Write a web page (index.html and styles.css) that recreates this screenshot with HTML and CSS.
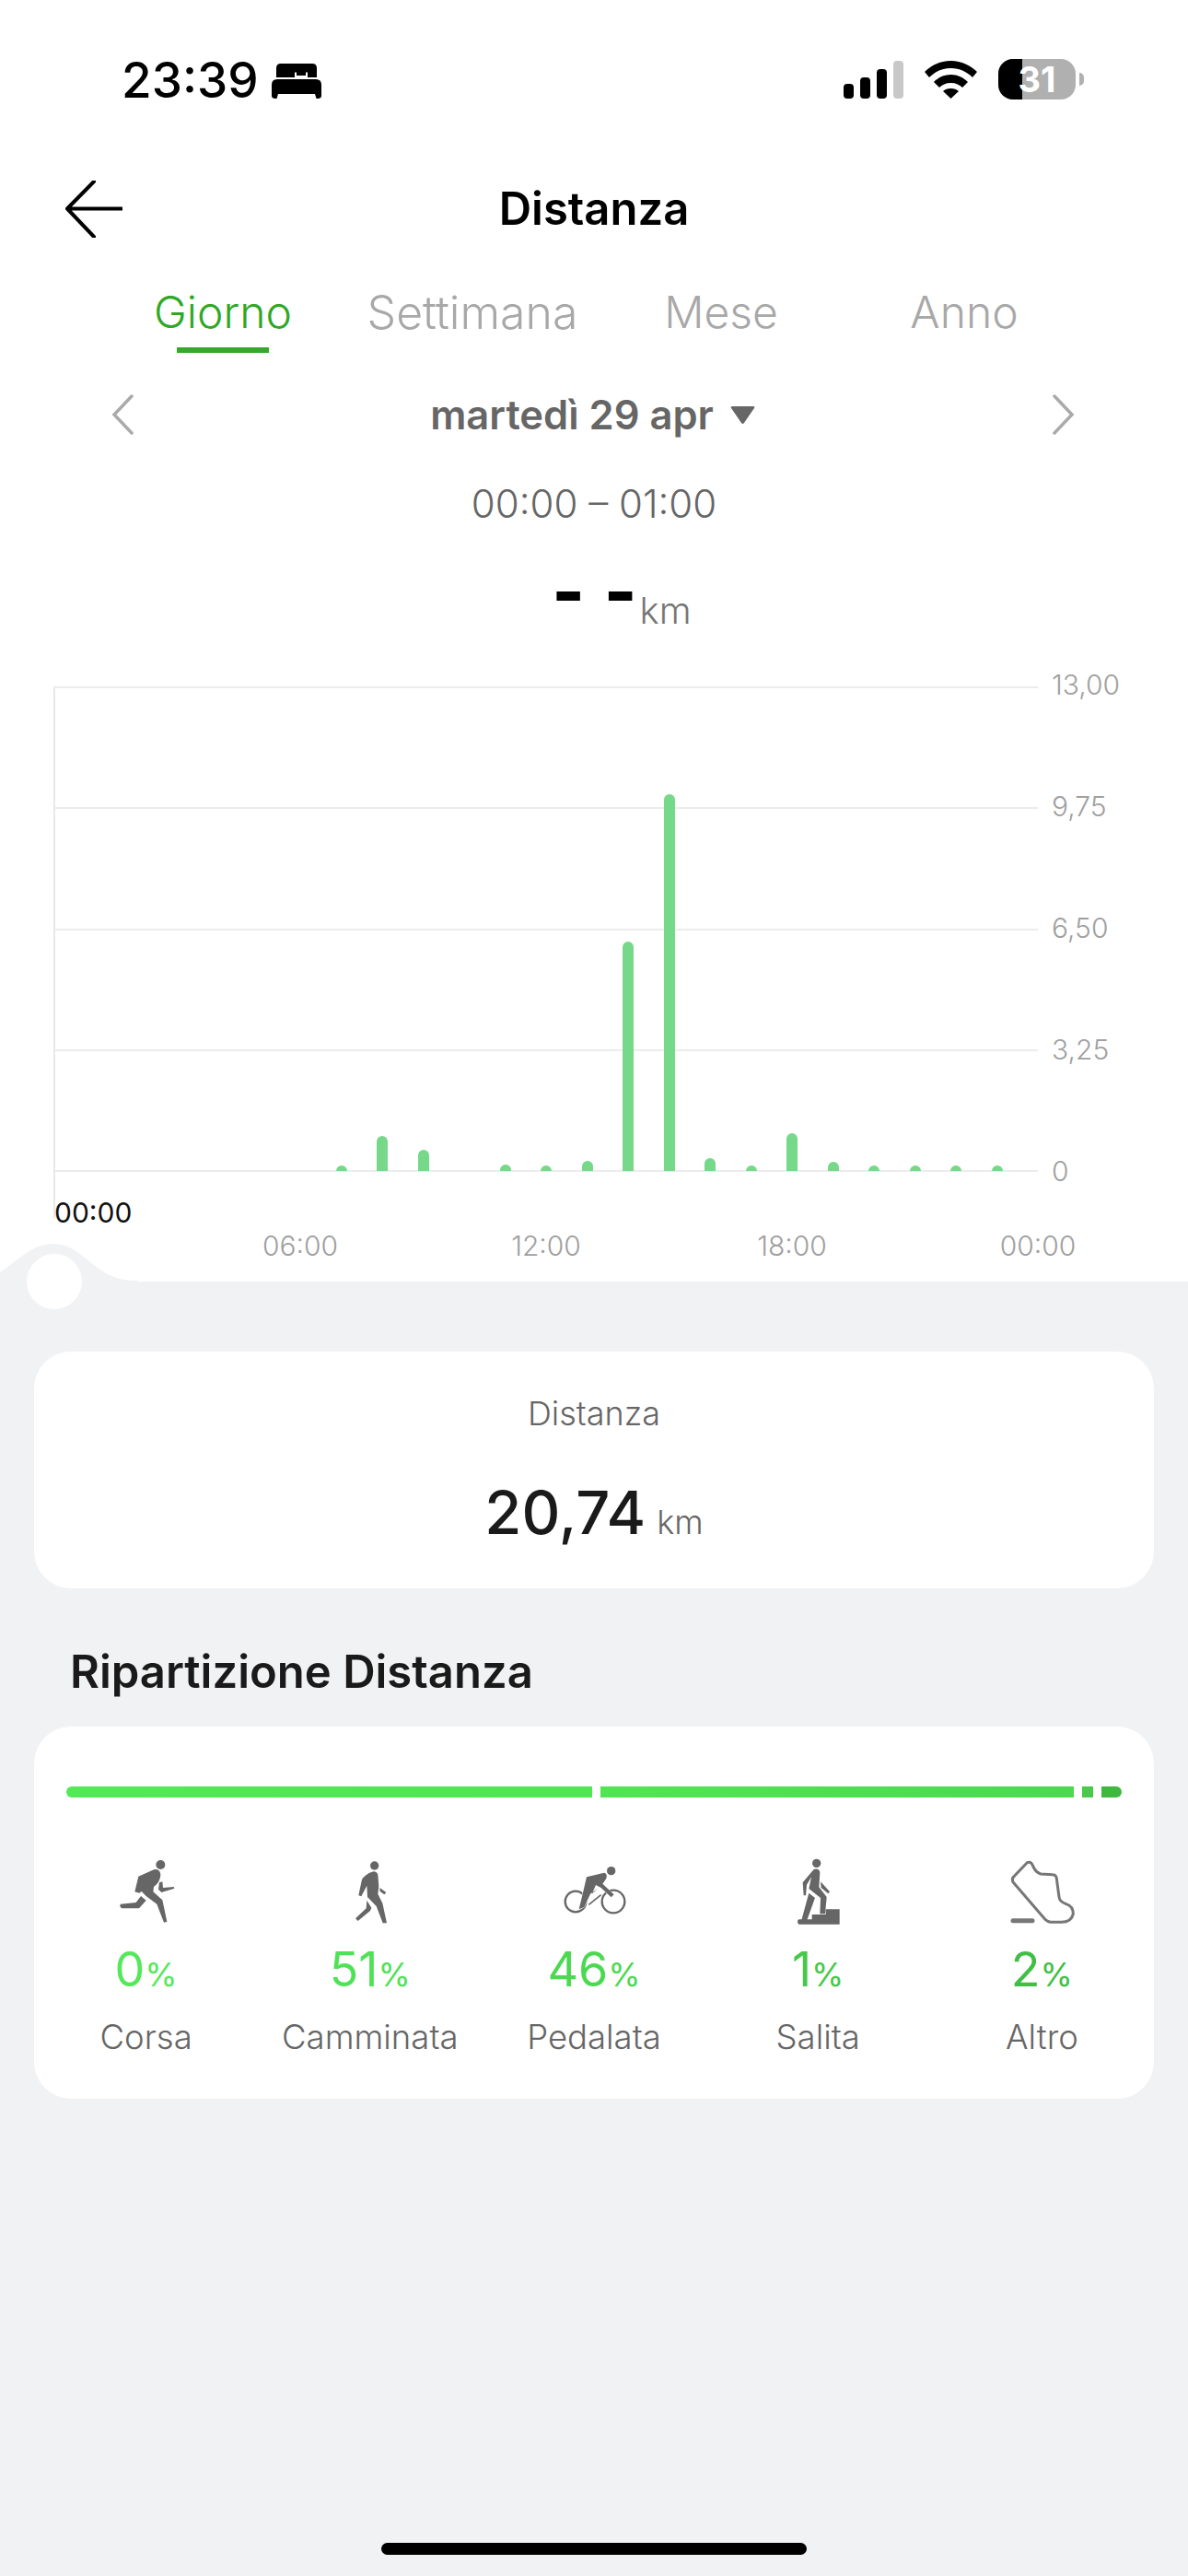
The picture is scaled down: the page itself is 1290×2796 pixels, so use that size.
FILE: index.html
```html
<!DOCTYPE html>
<html lang="it">
<head>
<meta charset="utf-8">
<title>Distanza</title>
<link rel="stylesheet" href="styles.css">
</head>
<body>
<div class="page">
  <section class="top">
    <header class="status">
      <div class="status-left">
        <span class="clock">23:39</span>
        <svg class="bed" viewBox="0 0 54 38"><path d="M5 15V5Q5 0 10 0H44Q49 0 49 5V15H39V9.500H37V13H27V9.500H25V15ZM0 23Q0 17 6 17H48Q54 17 54 23V35Q54 38 50 38H48.500L47 33H7L5.500 38H4Q0 38 0 35Z"/></svg>
      </div>
      <div class="status-right">
        <svg class="signal" viewBox="0 0 65 41"><rect x="0" y="25" width="11" height="16" rx="4"/><rect x="18" y="18" width="11" height="23" rx="4"/><rect x="36" y="9" width="11" height="32" rx="4"/><rect class="signal-off" x="54" y="0" width="11" height="41" rx="4"/></svg>
        <svg class="wifi" viewBox="0 0 57 41"><path d="M28.500 0C40 0 50 5 57 12L52 18C46 12 38 8 28.500 8C19 8 11 12 5 18L0 12C7 5 17 0 28.500 0ZM28.500 15C36 15 42 18 47 23L41 29C38 26 34 24 28.500 24C23 24 19 26 16 29L10 23C15 18 21 15 28.500 15ZM28.500 30C32 30 35 31 37 33L28.500 41L20 33C22 31 25 30 28.500 30Z"/></svg>
        <div class="battery"><span class="battery-fill"></span><span class="battery-num">31</span></div>
        <span class="battery-nub"></span>
      </div>
    </header>

    <nav class="nav">
      <svg class="back" viewBox="0 0 62 62"><path d="M31 1 2 30.500 31 61M2 30.500H61"/></svg>
      <h1 class="title">Distanza</h1>
    </nav>

    <div class="tabs">
      <div class="tab tab-active">Giorno<span class="tab-line"></span></div>
      <div class="tab tab-wide">Settimana</div>
      <div class="tab">Mese</div>
      <div class="tab">Anno</div>
    </div>

    <div class="date-row">
      <svg class="chev" viewBox="0 0 24 44"><path d="M22 2 3 22 22 42"/></svg>
      <div class="date"><span>martedì 29 apr</span><svg class="tri" viewBox="0 0 29 22"><path d="M3 2H26Q28 2 27 4L16 20Q14.500 22 13 20L2 4Q1 2 3 2Z"/></svg></div>
      <svg class="chev" viewBox="0 0 24 44"><path d="M2 2 21 22 2 42"/></svg>
    </div>

    <div class="range">00:00 – 01:00</div>
    <div class="reading"><span class="reading-val">- -</span><span class="reading-unit">km</span></div>

    <div class="chart">
      <div class="plot-row">
        <div class="plot">
          <div class="grid-line"></div><div class="grid-line"></div><div class="grid-line"></div><div class="grid-line"></div><div class="grid-line"></div>
          <div class="bars">
            <i></i><i></i><i></i><i></i><i></i><i></i><i></i>
            <i><b style="height:6px"></b></i>
            <i><b style="height:38px"></b></i>
            <i><b style="height:23px"></b></i>
            <i></i>
            <i><b style="height:7px"></b></i>
            <i><b style="height:6px"></b></i>
            <i><b style="height:11px"></b></i>
            <i><b style="height:249px"></b></i>
            <i><b style="height:409px"></b></i>
            <i><b style="height:14px"></b></i>
            <i><b style="height:6px"></b></i>
            <i><b style="height:41px"></b></i>
            <i><b style="height:10px"></b></i>
            <i><b style="height:6px"></b></i>
            <i><b style="height:6px"></b></i>
            <i><b style="height:6px"></b></i>
            <i><b style="height:6px"></b></i>
          </div>
        </div>
        <div class="y-axis"><span>13,00</span><span>9,75</span><span>6,50</span><span>3,25</span><span>0</span></div>
      </div>
      <div class="x-area">
        <span class="cursor-time">00:00</span>
        <div class="x-axis"><span>06:00</span><span>12:00</span><span>18:00</span><span>00:00</span></div>
      </div>
    </div>
    <svg class="bump" viewBox="0 0 150 44"><path d="M0 33C20 20 34 2 58 2C92 2 102 42 146 42H150V44H0Z"/></svg>
    <span class="handle"></span>
  </section>

  <main class="content">
    <section class="card total">
      <div class="total-label">Distanza</div>
      <div class="total-val">20,74<span class="total-unit">km</span></div>
    </section>

    <h2 class="section-title">Ripartizione Distanza</h2>

    <section class="card split">
      <div class="split-bar">
        <span class="seg seg-a"></span><span class="seg seg-b"></span><span class="seg seg-c"></span><span class="seg seg-d"></span>
      </div>
      <div class="modes">
        <div class="mode">
          <svg class="mode-icon" viewBox="-9 0 270 240"><circle cx="172" cy="30" r="15"/><path d="M100 68 152 45Q170 43 172 62 172 85 150 102L148 118 178 145 193 215 183 218 160 158 125 132 108 115 115 80 136 70Q120 88 112 115L103 122 88 118Z"/><path d="M108 132 125 146 102 172H46Q36 165 42 158L92 153Z"/><path d="M168 88 178 85 180 105 215 102 217 107 175 120 165 110Z"/></svg>
          <div class="pct pct-1">0<small>%</small></div>
          <div class="mode-name">Corsa</div>
        </div>
        <div class="mode">
          <svg class="mode-icon" viewBox="0 0 270 240"><circle cx="149" cy="33" r="14"/><path d="M141 53Q155 48 160 62L163 100 160 125 175 155 189 220 176 220 155 165 126 135 124 98 106 133 97 130 108 78Q118 62 141 53Z"/><path d="M124 146 139 170 135 180 95 213 87 205 122 172Z"/><path d="M166 105 187 120 181 127 167 117Z"/></svg>
          <div class="pct pct-2">51<small>%</small></div>
          <div class="mode-name">Camminata</div>
        </div>
        <div class="mode">
          <svg class="mode-icon" viewBox="-3 0 270 240"><circle cx="188" cy="50" r="14"/><circle class="wheel" cx="72" cy="150" r="34"/><circle class="wheel" cx="195" cy="150" r="37"/><path class="wheel wheel-frame" d="M115 160 155 128"/><path class="bike-body" d="M108 70 165 56Q177 58 172 75L160 92 197 127 188 136 155 105 138 96 125 125 146 105 120 125 100 168 83 175 95 125Z"/></svg>
          <div class="pct pct-3">46<small>%</small></div>
          <div class="mode-name">Pedalata</div>
        </div>
        <div class="mode">
          <svg class="mode-icon" viewBox="-24 0 270 240"><circle cx="107" cy="25" r="14"/><path d="M98 45Q115 40 118 55L115 103 140 135 135 190H118L120 138 82 108 90 70 75 95 72 130 65 130 62 88Z"/><path d="M82 122 102 138 76 210H58Z"/><path d="M120 85 150 118 145 124 122 105Z"/><path d="M50 208H92V192H137V175H182V224H50Q45 222 45 215 45 209 50 208Z"/></svg>
          <div class="pct pct-4">1<small>%</small></div>
          <div class="mode-name">Salita</div>
        </div>
        <div class="mode">
          <svg class="mode-icon" viewBox="0 0 270 240"><path class="shoe" d="M88 23Q100 18 106 32 115 55 132 60L170 62Q183 62 184 75L192 135Q193 150 215 158 238 165 238 190 232 217 200 217H165Q150 215 140 200L45 90Q35 78 45 68Z"/><path class="shoe-dash" d="M42 212H105"/></svg>
          <div class="pct pct-5">2<small>%</small></div>
          <div class="mode-name">Altro</div>
        </div>
      </div>
    </section>
  </main>

  <div class="home-bar"></div>
</div>
</body>
</html>
```

FILE: styles.css
```css
* { box-sizing: border-box; }
html, body { margin: 0; padding: 0; }
body { font-family: Inter, "Liberation Sans", sans-serif; background: #f1f2f4; }
.page { width: 1290px; height: 2796px; display: flex; flex-direction: column; background: #f1f2f4; overflow: hidden; }

.top { position: relative; height: 1391px; flex: none; background: #fff; }

.status { height: 172px; display: flex; justify-content: space-between; padding: 64px 113px 0 132px; }
.status-left { display: flex; align-items: flex-start; gap: 14px; }
.clock { font-size: 53px; line-height: 46px; font-weight: 500; color: #000; }
.bed { width: 54px; height: 38px; margin-top: 5px; fill: #000; }
.status-right { display: flex; align-items: flex-start; }
.signal { width: 65px; height: 41px; margin-top: 2px; fill: #000; }
.signal-off { fill: #c8c8c8; }
.wifi { width: 57px; height: 41px; margin: 2px 23px 0 23px; fill: #000; }
.battery { position: relative; width: 84px; height: 44px; border-radius: 16px; background: #b0b0b0; overflow: hidden; }
.battery-fill { position: absolute; left: 0; top: 0; bottom: 0; width: 26px; background: #000; }
.battery-num { position: absolute; left: 21px; top: 0; width: 42px; text-align: center; font-size: 38px; line-height: 44px; font-weight: 700; color: #fff; }
.battery-nub { width: 5px; height: 14px; margin: 15px 0 0 4px; border-radius: 0 5px 5px 0; background: #b0b0b0; }

.nav { position: relative; height: 110px; display: flex; align-items: center; justify-content: center; }
.back { position: absolute; left: 71px; top: 24px; width: 62px; height: 62px; fill: none; stroke: #000; stroke-width: 4; stroke-linecap: round; stroke-linejoin: round; }
.title { margin: 0; font-size: 49px; line-height: 60px; font-weight: 600; color: #000; }

.tabs { height: 101px; padding: 24px 0 0 106px; display: grid; grid-template-columns: 272px 270px 270px 258px; }
.tab { position: relative; text-align: center; font-size: 48px; line-height: 66px; font-weight: 300; color: #a8a8a8; }
.tab-wide { font-size: 50px; }
.tab-active { color: #2fa824; }
.tab-line { position: absolute; left: 86px; bottom: 0; width: 100px; height: 6px; background: #38a82c; }

.date-row { height: 134px; display: flex; align-items: center; justify-content: space-between; padding: 0 123px 0 121px; }
.chev { width: 24px; height: 44px; fill: none; stroke: #aaa; stroke-width: 3.500; stroke-linecap: round; }
.date { display: flex; align-items: center; gap: 17px; font-size: 43.500px; line-height: 60px; font-weight: 600; color: #666; }
.tri { width: 29px; height: 22px; fill: #666; }

.range { height: 60px; text-align: center; font-size: 42px; line-height: 60px; font-weight: 300; color: #666; }

.reading { height: 84px; display: flex; justify-content: center; align-items: flex-start; padding: 28px 0 0 60px; }
.reading-val { font-size: 76px; line-height: 72px; font-weight: 800; color: #000; word-spacing: 4px; }
.reading-unit { font-size: 40px; line-height: 46px; margin: 35px 0 0 3px; font-weight: 300; color: #777; }

.chart { margin-top: 84px; padding-left: 59px; }
.plot-row { display: flex; height: 527px; }
.plot { position: relative; width: 1068px; display: flex; flex-direction: column; justify-content: space-between; }
.plot::before { content: ""; position: absolute; left: -1px; top: 0; width: 2px; height: 577px; background: #e8e8e8; }
.grid-line { height: 2px; background: #ececec; }
.bars { position: absolute; left: -22px; right: -22px; top: 0; bottom: 1px; display: grid; grid-template-columns: repeat(24, 44.5px); }
.bars i { display: flex; align-items: flex-end; justify-content: center; }
.bars b { width: 12px; border-radius: 6px 6px 0 0; background: #76d98a; }

.y-axis { width: 100px; margin: -20px 0 -17px 15px; display: flex; flex-direction: column; justify-content: space-between; font-size: 30px; line-height: 36px; font-weight: 300; color: #a0a0a0; }
.x-area { position: relative; height: 80px; }
.cursor-time { position: absolute; left: 0; top: 26px; font-size: 30px; line-height: 36px; font-weight: 400; color: #111; }
.x-axis { position: absolute; left: 0; top: 62px; width: 1068px; font-size: 30px; line-height: 36px; font-weight: 300; color: #a0a0a0; }
.x-axis span { position: absolute; top: 0; width: 120px; text-align: center; }
.x-axis span:nth-child(1) { left: 207px; }
.x-axis span:nth-child(2) { left: 474px; }
.x-axis span:nth-child(3) { left: 741px; }
.x-axis span:nth-child(4) { left: 1008px; }

.bump { position: absolute; left: 0; bottom: -1px; width: 150px; height: 44px; fill: #f1f2f4; }
.handle { position: absolute; left: 29px; top: 1361px; width: 60px; height: 60px; border-radius: 50%; background: #fff; z-index: 1; }

.content { flex: none; padding: 76px 37px 0 37px; }
.card { background: #fff; border-radius: 40px; }
.total { height: 257px; display: flex; flex-direction: column; align-items: center; padding-top: 46px; }
.total-label { font-size: 36px; line-height: 42px; font-weight: 300; color: #666; }
.total-val { margin-top: 45px; display: flex; align-items: baseline; font-size: 65px; line-height: 84px; font-weight: 500; color: #1a1a1a; }
.total-unit { margin-left: 12px; font-size: 36px; font-weight: 300; color: #666; }

.section-title { margin: 60px 0 0 39px; height: 90px; font-size: 49px; line-height: 62px; font-weight: 600; color: #1a1a1a; }

.split { height: 404px; padding-top: 65px; }
.split-bar { display: flex; height: 12px; margin: 0 35px; }
.seg { display: block; height: 12px; }
.seg-a { width: 571px; border-radius: 6px 0 0 6px; background: linear-gradient(90deg, #52e856, #50e552); }
.seg-b { width: 514px; margin-left: 9px; background: linear-gradient(90deg, #50e552, #4cd950); }
.seg-c { width: 12px; margin-left: 9px; background: #4ac94c; }
.seg-d { width: 22px; margin-left: 9px; border-radius: 0 6px 6px 0; background: #3fb83f; }

.modes { display: grid; grid-template-columns: repeat(5, 1fr); margin-top: 63px; }
.mode { display: flex; flex-direction: column; align-items: center; }
.mode-icon { width: 90px; height: 80px; fill: #666; }
.wheel { fill: none; stroke: #666; stroke-width: 7; }
.wheel-frame { stroke-width: 5; }
.bike-body { stroke: #fff; stroke-width: 3; paint-order: stroke; }
.shoe { fill: none; stroke: #777; stroke-width: 9; stroke-linejoin: round; }
.shoe-dash { fill: none; stroke: #777; stroke-width: 15; stroke-linecap: round; }

.pct { margin-top: 14px; font-size: 52px; line-height: 60px; font-weight: 400; }
.pct small { font-size: 36px; }
.pct-1 { color: #55e85a; }
.pct-2 { color: #50e256; }
.pct-3 { color: #4cd952; }
.pct-4 { color: #45c94a; }
.pct-5 { color: #3fbf45; }
.mode-name { margin-top: 14px; font-size: 36.500px; line-height: 48px; font-weight: 300; color: #666; }

.home-bar { width: 462px; height: 13px; margin: auto auto 23px; border-radius: 7px; background: #000; }
```
